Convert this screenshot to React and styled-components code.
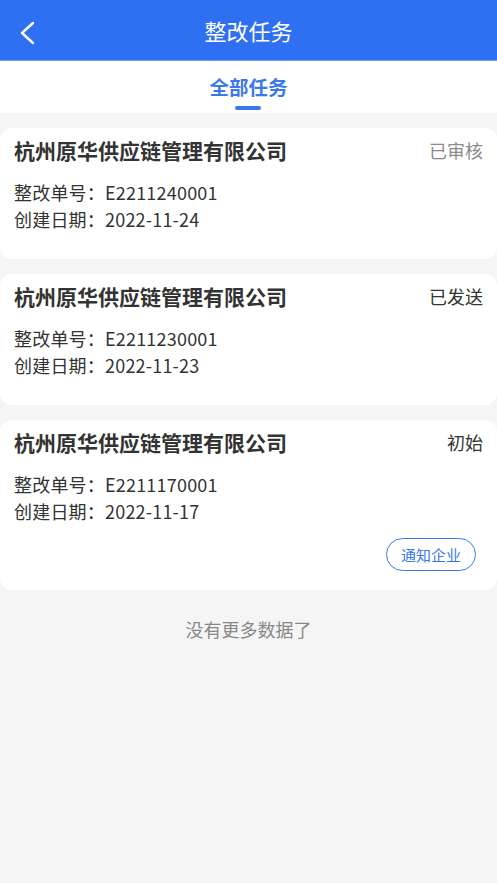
import styled, { createGlobalStyle } from 'styled-components';

const Global = createGlobalStyle`
    body {
        margin: 0;
        background: #f5f5f5;
        font-family: 'Noto Sans CJK SC', 'Noto Sans', sans-serif;
    }
`;

const Page = styled.div`
    width: 497px;
    min-height: 883px;
    background: #f5f5f5;
`;

const Header = styled.div`
    height: 61px;
    background: #2f6ff1;
    display: flex;
    align-items: center;
    justify-content: center;
    position: relative;
    color: #fff;
    font-size: 22px;
    border-bottom: 1px solid #6d9af5;
    box-sizing: border-box;
`;

const Back = styled.svg`
    position: absolute;
    left: 18px;
    top: 20px;
`;

const Tabs = styled.div`
    height: 52px;
    background: #fff;
    display: flex;
    justify-content: center;
`;

const Tab = styled.div`
    display: flex;
    flex-direction: column;
    align-items: center;
    padding-top: 12px;
    color: #3a78ea;
    font-size: 19.5px;
    font-weight: 700;
    line-height: 27px;
`;

const Underline = styled.div`
    width: 26px;
    height: 4px;
    border-radius: 2px;
    background: #3a78ea;
    margin-top: 6px;
`;

const List = styled.div`
    display: flex;
    flex-direction: column;
    gap: 15px;
    padding-top: 15px;
`;

const Card = styled.div`
    background: #fff;
    border-radius: 12px;
    padding: 8px 14px 0;
    min-height: ${(p) => p.$h}px;
    box-sizing: border-box;
    display: flex;
    flex-direction: column;
`;

const TitleRow = styled.div`
    display: flex;
    justify-content: space-between;
    align-items: center;
    height: 28px;
`;

const Company = styled.div`
    font-size: 21px;
    font-weight: 700;
    color: #333;
`;

const Status = styled.div`
    font-size: 18px;
    color: ${(p) => (p.$muted ? '#8a8a8a' : '#333')};
`;

const Info = styled.div`
    margin-top: 15px;
    font-size: 18px;
    letter-spacing: 0.2px;
    line-height: 27px;
    color: #333;
`;

const Actions = styled.div`
    display: flex;
    justify-content: flex-end;
    margin-top: 13px;
    padding-right: 7px;
`;

const NotifyButton = styled.button`
    width: 90px;
    height: 33px;
    border: 1.5px solid #3a78ea;
    border-radius: 17px;
    background: #fff;
    color: #3a78ea;
    font-size: 15px;
    font-family: 'Noto Sans CJK SC', sans-serif;
    padding: 0;
`;

const Footer = styled.div`
    text-align: center;
    color: #888;
    font-size: 18px;
    margin-top: 26px;
`;

const tasks = [
    { no: 'E2211240001', date: '2022-11-24', status: '已审核', muted: true },
    { no: 'E2211230001', date: '2022-11-23', status: '已发送' },
    { no: 'E2211170001', date: '2022-11-17', status: '初始', notify: true },
];

export default function App() {
    return (
        <Page>
            <Global />
            <Header>
                <Back width="20" height="26" viewBox="0 0 20 26">
                    <path d="M15 3 L4 13 L15 23" fill="none" stroke="#fff" strokeWidth="2.4" strokeLinecap="round" strokeLinejoin="round" />
                </Back>
                整改任务
            </Header>
            <Tabs>
                <Tab>
                    全部任务
                    <Underline />
                </Tab>
            </Tabs>
            <List>
                {tasks.map((t) => (
                    <Card key={t.no} $h={t.notify ? 170 : 131}>
                        <TitleRow>
                            <Company>杭州原华供应链管理有限公司</Company>
                            <Status $muted={t.muted}>{t.status}</Status>
                        </TitleRow>
                        <Info>
                            <div>整改单号：{t.no}</div>
                            <div>创建日期：{t.date}</div>
                        </Info>
                        {t.notify && (
                            <Actions>
                                <NotifyButton>通知企业</NotifyButton>
                            </Actions>
                        )}
                    </Card>
                ))}
            </List>
            <Footer>没有更多数据了</Footer>
        </Page>
    );
}
